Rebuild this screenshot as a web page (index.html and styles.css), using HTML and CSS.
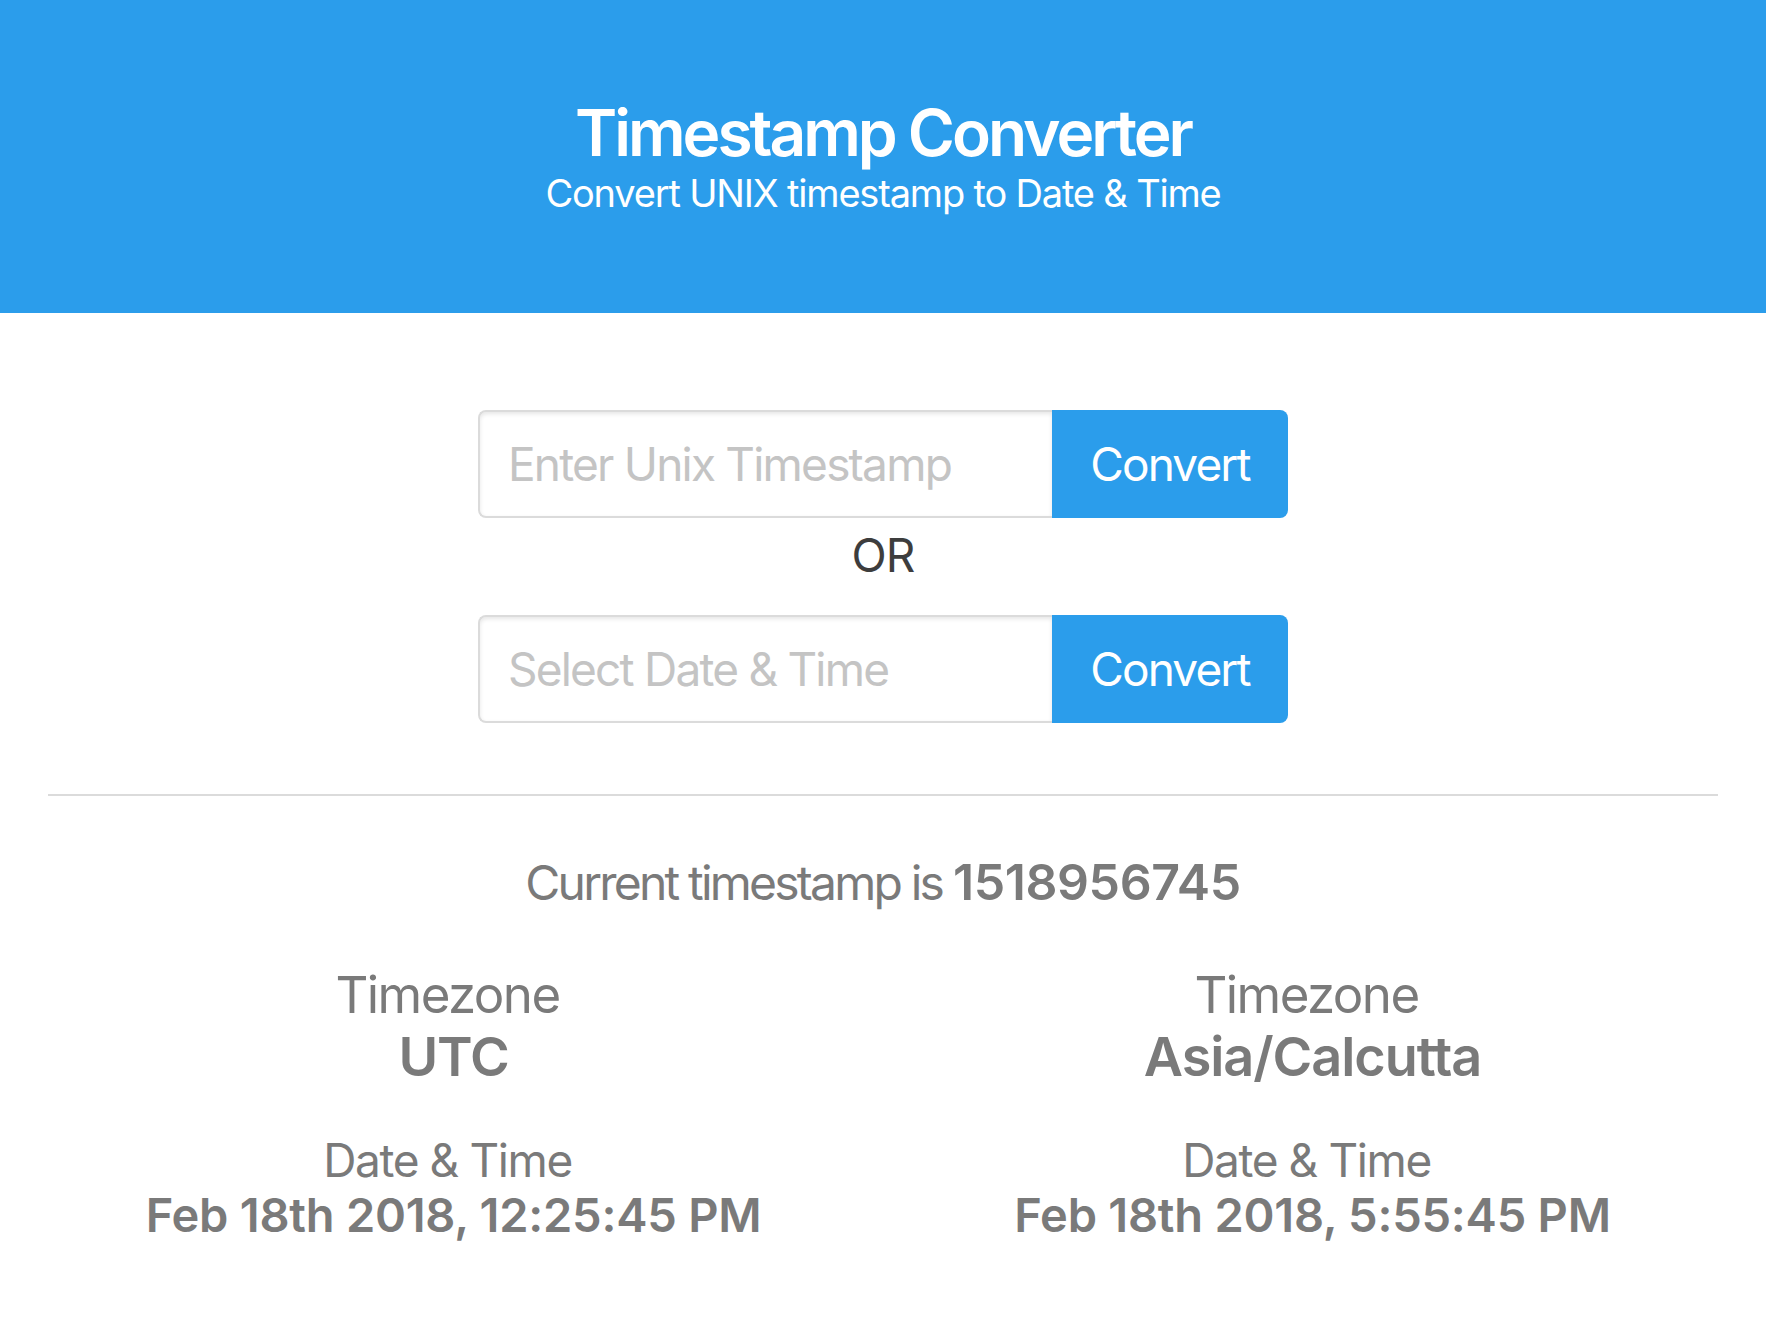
FILE: index.html
```html
<!DOCTYPE html>
<html lang="en">
<head>
<meta charset="utf-8">
<title>Timestamp Converter</title>
<link rel="stylesheet" href="styles.css">
</head>
<body>
<header class="hero">
  <h1 class="hero-title">Timestamp Converter</h1>
  <p class="hero-subtitle">Convert UNIX timestamp to Date &amp; Time</p>
</header>
<main class="container">
  <section class="converter">
    <div class="field">
      <input class="field-input" type="text" placeholder="Enter Unix Timestamp">
      <button class="field-button" type="button">Convert</button>
    </div>
    <p class="or">OR</p>
    <div class="field">
      <input class="field-input" type="text" placeholder="Select Date &amp; Time">
      <button class="field-button" type="button">Convert</button>
    </div>
  </section>
  <hr class="divider">
  <p class="current"><span class="current-label">Current timestamp is </span><strong class="current-value">1518956745</strong></p>
  <div class="columns">
    <div class="column">
      <p class="tz-label">Timezone</p>
      <p class="tz-value">UTC</p>
      <p class="dt-label">Date &amp; Time</p>
      <p class="dt-value">Feb 18th 2018, 12:25:45 PM</p>
    </div>
    <div class="column">
      <p class="tz-label">Timezone</p>
      <p class="tz-value">Asia/Calcutta</p>
      <p class="dt-label">Date &amp; Time</p>
      <p class="dt-value">Feb 18th 2018, 5:55:45 PM</p>
    </div>
  </div>
</main>
</body>
</html>
```

FILE: styles.css
```css
* { box-sizing: border-box; }
html, body { margin: 0; padding: 0; background: #fff; }
body {
  font-family: Inter, "Liberation Sans", sans-serif;
  color: #7a7a7a;
  -webkit-font-smoothing: antialiased;
}
p, h1 { margin: 0; }

.hero {
  background: #2b9deb;
  color: #fff;
  text-align: center;
  padding: 97px 24px 96px;
}
.hero-title {
  font-size: 64px;
  line-height: 72px;
  font-weight: 600;
  letter-spacing: -0.047em;
}
.hero-subtitle {
  font-size: 38px;
  line-height: 48px;
  font-weight: 400;
  letter-spacing: -0.031em;
}

.container {
  padding: 0 48px;
}
.converter {
  display: flex;
  flex-direction: column;
  align-items: center;
  padding-top: 97px;
}
.field {
  display: flex;
  width: 810px;
  height: 108px;
}
.field-input {
  flex: 1;
  min-width: 0;
  height: 108px;
  border: 2px solid #dbdbdb;
  border-right: none;
  border-radius: 8px 0 0 8px;
  box-shadow: inset 0 2px 4px rgba(10, 10, 10, 0.1);
  padding: 0 28px;
  font-family: inherit;
  font-size: 46px;
  letter-spacing: -0.039em;
  color: #363636;
  background: #fff;
  outline: none;
}
.field-input::placeholder { color: #c4c4c4; }
.field-button {
  width: 236px;
  height: 108px;
  border: none;
  border-radius: 0 8px 8px 0;
  background: #2b9deb;
  color: #fff;
  font-family: inherit;
  font-size: 46px;
  letter-spacing: -0.041em;
  padding: 0;
  cursor: pointer;
}
.or {
  font-size: 46px;
  line-height: 60px;
  color: #3d3d3d;
  margin: 7px 0 30px;
  letter-spacing: -0.02em;
}

.divider {
  border: none;
  height: 2px;
  background: #dbdbdb;
  margin: 71px 0 0;
}

.current {
  text-align: center;
  font-size: 48px;
  line-height: 64px;
  margin-top: 54px;
}
.current-label { letter-spacing: -0.058em; }
.current-value {
  font-size: 50px;
  font-weight: 600;
  letter-spacing: -0.008em;
}

.columns {
  display: grid;
  grid-template-columns: 1fr 1fr;
  margin: 49px -24px 0;
  text-align: center;
}
.tz-label {
  font-size: 51px;
  line-height: 62px;
  letter-spacing: -0.031em;
  padding-right: 12px;
}
.tz-value {
  font-size: 54px;
  line-height: 56px;
  font-weight: 600;
  letter-spacing: -0.02em;
  margin-top: 3px;
}
.dt-label {
  font-size: 46px;
  line-height: 56px;
  margin-top: 47px;
  letter-spacing: -0.03em;
  padding-right: 12px;
}
.dt-value {
  font-size: 47px;
  line-height: 54px;
  font-weight: 600;
  letter-spacing: -0.005em;
}
```
